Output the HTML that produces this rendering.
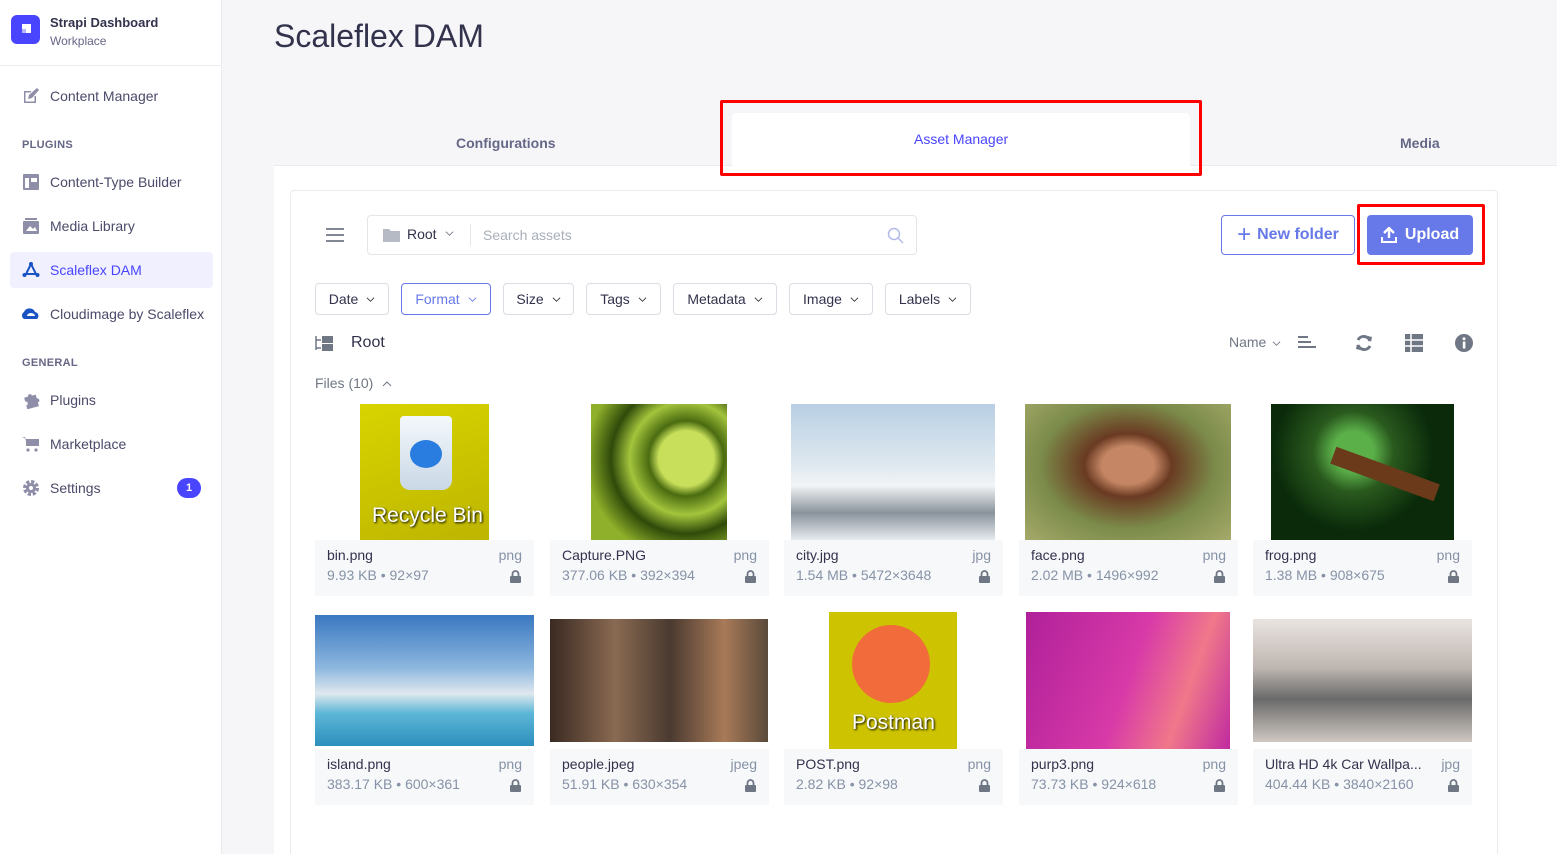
<!DOCTYPE html>
<html><head><meta charset="utf-8"><style>
*{box-sizing:border-box;margin:0;padding:0}
html{width:1557px;height:854px;overflow:hidden}
body{width:1557px;height:854px;overflow:hidden;background:#f6f6f9;font-family:"Liberation Sans",sans-serif;position:relative;color:#32324d}
.a{position:absolute}
.side{left:0;top:0;width:222px;height:854px;background:#fff;border-right:1px solid #eaeaef}
.nav{position:absolute;left:22px;font-size:14px;color:#4a4a6a;display:flex;align-items:center}
.nav svg{width:18px;height:18px;margin-right:10px}
.sec{position:absolute;left:22px;font-size:11px;color:#666687;font-weight:bold;letter-spacing:.3px}
.flt{position:absolute;top:283px;height:32px;border:1px solid #dcdce4;border-radius:4px;font-size:14px;color:#32324d;display:flex;align-items:center;justify-content:center;gap:8px;background:#fff}
.chev{width:9px;height:9px}
.card{position:absolute;width:219px;height:56px;background:#f7f8fa}
.card .n{position:absolute;left:12px;top:7px;font-size:14px;color:#32324d}
.card .m{position:absolute;left:12px;top:27px;font-size:14px;color:#8692a6}
.card .t{position:absolute;right:12px;top:7px;font-size:14px;color:#8692a6}
.card svg{position:absolute;right:13px;top:30px}
.img{position:absolute}
</style></head><body>
<div class="a side"></div>
<div class="a" style="left:11px;top:15px;width:29px;height:29px;border-radius:6px;background:#4945ff"></div>
<svg class="a" style="left:18px;top:22px" width="15" height="15" viewBox="0 0 15 15"><path d="M4 2h9v9H8V7H4z" fill="#fff"/><path d="M4 7h4v4H4z" fill="#fff" opacity=".6"/></svg>
<div class="a" style="left:50px;top:15px;font-size:13px;font-weight:bold;color:#32324d">Strapi Dashboard</div>
<div class="a" style="left:50px;top:34px;font-size:12px;color:#666687">Workplace</div>
<div class="a" style="left:0;top:65px;width:221px;height:1px;background:#eaeaef"></div>
<div class="nav" style="top:87px"><svg viewBox="0 0 18 18"><path d="M2 4h7v1.5H3.5v9h9V9H14v7H2z" fill="#8e8ea9"/><path d="M6 12l1-4 8-7 2 2-7 8z" fill="#8e8ea9"/></svg>Content Manager</div>
<div class="sec" style="top:139px">PLUGINS</div>
<div class="nav" style="top:173px"><svg viewBox="0 0 18 18"><rect x="1" y="1" width="16" height="16" rx="1" fill="#8e8ea9"/><rect x="3" y="5" width="4" height="10" fill="#fff"/><rect x="9" y="5" width="6" height="4" fill="#fff"/></svg>Content-Type Builder</div>
<div class="nav" style="top:217px"><svg viewBox="0 0 18 18"><rect x="3" y="1" width="12" height="2" fill="#8e8ea9"/><rect x="1" y="4" width="16" height="13" rx="1" fill="#8e8ea9"/><path d="M4 14l4-5 3 3 2-2 2 4z" fill="#fff"/></svg>Media Library</div>
<div class="a" style="left:10px;top:252px;width:203px;height:36px;border-radius:4px;background:#f0f0ff"></div>
<div class="nav" style="top:261px;color:#4945ff"><svg viewBox="0 0 18 18"><circle cx="9" cy="3" r="2" fill="#1a53c4"/><circle cx="2.5" cy="14" r="2" fill="#1a53c4"/><circle cx="15.5" cy="14" r="2" fill="#1a53c4"/><path d="M9 3L4 13h10z" fill="none" stroke="#1a53c4" stroke-width="2"/></svg>Scaleflex DAM</div>
<div class="nav" style="top:305px"><svg viewBox="0 0 18 18"><path d="M2 14a4 4 0 010-7 6 6 0 0111 0 4 4 0 012 7z" fill="#1a53c4"/><path d="M5 11a4 3 0 018 0z" fill="#fff"/></svg>Cloudimage by Scaleflex</div>
<div class="sec" style="top:357px">GENERAL</div>
<div class="nav" style="top:391px"><svg viewBox="0 0 18 18"><path d="M3 5h4a2 2 0 114 0h4v4a2 2 0 110 4v4H3v-4a2 2 0 100-4z" fill="#8e8ea9" transform="rotate(-15 9 9)"/></svg>Plugins</div>
<div class="nav" style="top:435px"><svg viewBox="0 0 18 18"><path d="M0 2h3l2 9h10l2-7H5" fill="#8e8ea9"/><rect x="4" y="4" width="13" height="7" fill="#8e8ea9"/><circle cx="6" cy="15" r="1.6" fill="#8e8ea9"/><circle cx="14" cy="15" r="1.6" fill="#8e8ea9"/></svg>Marketplace</div>
<div class="nav" style="top:479px"><svg viewBox="0 0 18 18"><circle cx="9" cy="9" r="6" fill="none" stroke="#8e8ea9" stroke-width="4" stroke-dasharray="3 1.7"/><circle cx="9" cy="9" r="5" fill="#8e8ea9"/><circle cx="9" cy="9" r="2" fill="#fff"/></svg>Settings</div>
<div class="a" style="left:177px;top:478px;width:24px;height:20px;border-radius:10px;background:#4945ff;color:#fff;font-size:11px;font-weight:bold;text-align:center;line-height:20px">1</div>

<div class="a" style="left:274px;top:18px;font-size:32px;color:#32324d">Scaleflex DAM</div>
<div class="a" style="left:274px;top:165px;width:1283px;height:690px;background:#fff;border-top:1px solid #eaeaef"></div>
<div class="a" style="left:456px;top:135px;font-size:14px;font-weight:bold;color:#666687">Configurations</div>
<div class="a" style="left:1400px;top:135px;font-size:14px;font-weight:bold;color:#666687">Media</div>
<div class="a" style="left:732px;top:113px;width:458px;height:53px;background:#fff;border-radius:4px 4px 0 0"></div>
<div class="a" style="left:914px;top:131px;font-size:14px;color:#4945ff">Asset Manager</div>
<div class="a" style="left:720px;top:100px;width:482px;height:76px;border:3px solid #f00;border-radius:2px"></div>

<div class="a" style="left:290px;top:190px;width:1208px;height:664px;border:1px solid #eaeaef;border-bottom:none;border-radius:4px 4px 0 0;background:#fff"></div>
<svg class="a" style="left:325px;top:227px" width="20" height="16"><path d="M1 2h18M1 8h18M1 14h18" stroke="#6f7785" stroke-width="1.8"/></svg>
<div class="a" style="left:367px;top:215px;width:550px;height:40px;border:1px solid #e3e5e9;border-radius:4px"></div>
<svg class="a" style="left:383px;top:228px" width="17" height="14"><path d="M0 1h6l2 2h9v11H0z" fill="#b6bac4"/></svg>
<div class="a" style="left:407px;top:226px;font-size:14px;color:#32324d">Root</div>
<svg class="a chev" style="left:445px;top:229px" viewBox="0 0 10 10"><path d="M1 3l4 4 4-4" stroke="#6f7785" fill="none"/></svg>
<div class="a" style="left:470px;top:224px;width:1px;height:22px;background:#e3e5e9"></div>
<div class="a" style="left:483px;top:227px;font-size:14px;color:#a9afbb">Search assets</div>
<svg class="a" style="left:887px;top:227px" width="17" height="17"><circle cx="7" cy="7" r="5.5" stroke="#b3b9e8" stroke-width="1.5" fill="none"/><path d="M11 11l5 5" stroke="#b3b9e8" stroke-width="1.5"/></svg>

<div class="a" style="left:1221px;top:215px;width:134px;height:40px;border:1px solid #6779e8;border-radius:4px;color:#6779e8;font-size:16px;font-weight:bold;display:flex;align-items:center;justify-content:center;gap:6px"><span style="font-size:24px;font-weight:normal;line-height:1">+</span>New folder</div>
<div class="a" style="left:1367px;top:215px;width:106px;height:40px;background:#6779e8;border-radius:4px;color:#fff;font-size:16px;font-weight:bold;display:flex;align-items:center;justify-content:center;gap:8px"><svg width="16" height="16"><path d="M8 1v10M3 6l5-5 5 5" stroke="#fff" stroke-width="2.4" fill="none"/><path d="M1 10v5h14v-5" stroke="#fff" stroke-width="2" fill="none"/></svg>Upload</div>
<div class="a" style="left:1357px;top:204px;width:128px;height:61px;border:3px solid #f00;border-radius:2px"></div>

<div class="flt" style="left:315px;width:74px">Date <svg class="chev" viewBox="0 0 10 10"><path d="M1 3l4 4 4-4" stroke="#333" fill="none"/></svg></div>
<div class="flt" style="left:401px;width:90px;border-color:#6779e8;color:#6779e8">Format <svg class="chev" viewBox="0 0 10 10"><path d="M1 3l4 4 4-4" stroke="#6779e8" fill="none"/></svg></div>
<div class="flt" style="left:503px;width:71px">Size <svg class="chev" viewBox="0 0 10 10"><path d="M1 3l4 4 4-4" stroke="#333" fill="none"/></svg></div>
<div class="flt" style="left:586px;width:75px">Tags <svg class="chev" viewBox="0 0 10 10"><path d="M1 3l4 4 4-4" stroke="#333" fill="none"/></svg></div>
<div class="flt" style="left:673px;width:104px">Metadata <svg class="chev" viewBox="0 0 10 10"><path d="M1 3l4 4 4-4" stroke="#333" fill="none"/></svg></div>
<div class="flt" style="left:789px;width:84px">Image <svg class="chev" viewBox="0 0 10 10"><path d="M1 3l4 4 4-4" stroke="#333" fill="none"/></svg></div>
<div class="flt" style="left:885px;width:86px">Labels <svg class="chev" viewBox="0 0 10 10"><path d="M1 3l4 4 4-4" stroke="#333" fill="none"/></svg></div>

<svg class="a" style="left:315px;top:335px" width="19" height="16"><path d="M1 1v14M1 5h5M1 13h5" stroke="#6f7785" stroke-width="1.5"/><rect x="7" y="1" width="11" height="7" fill="#6f7785"/><rect x="7" y="9" width="11" height="7" fill="#6f7785"/></svg>
<div class="a" style="left:351px;top:334px;font-size:16px;color:#32324d">Root</div>
<div class="a" style="left:315px;top:375px;font-size:14px;color:#6f7785">Files (10)</div>
<svg class="a" style="left:382px;top:379px" width="10" height="10"><path d="M1 7l4-4 4 4" stroke="#6f7785" fill="none"/></svg>

<div class="a" style="left:1229px;top:334px;font-size:14px;color:#6f7785">Name</div>
<svg class="a chev" style="left:1272px;top:339px" viewBox="0 0 10 10"><path d="M1 3l4 4 4-4" stroke="#6f7785" fill="none"/></svg>
<svg class="a" style="left:1298px;top:335px" width="18" height="15"><path d="M0 2h10M0 7h13M0 12h18" stroke="#6f7785" stroke-width="2"/></svg>
<svg class="a" style="left:1355px;top:334px" width="18" height="18"><path d="M15 7A6.5 6.5 0 003 6M3 11a6.5 6.5 0 0012 1" stroke="#6f7785" stroke-width="3" fill="none"/><path d="M13 2l4 1-1 5zM5 16l-4-1 1-5z" fill="#6f7785"/></svg>
<svg class="a" style="left:1405px;top:334px" width="18" height="18"><path d="M0 0h18v18H0z" fill="#6f7785"/><path d="M0 6h18M0 12h18M6 0v18" stroke="#fff" stroke-width="1.5"/></svg>
<svg class="a" style="left:1455px;top:334px" width="18" height="18"><circle cx="9" cy="9" r="9" fill="#6f7785"/><rect x="7.8" y="7.5" width="2.6" height="7" fill="#fff"/><circle cx="9" cy="4.8" r="1.5" fill="#fff"/></svg>

<div class="img" style="left:360px;top:404px;width:129px;height:136px;background:linear-gradient(160deg,#d8d400,#bdb500)"></div>
<div class="img" style="left:400px;top:416px;width:52px;height:74px;background:linear-gradient(#f4f8fc,#c9d8e6);border-radius:4px 4px 10px 10px"></div>
<div class="img" style="left:410px;top:440px;width:32px;height:28px;border-radius:50%;background:#2a7de0"></div>
<div class="a" style="left:372px;top:504px;font-size:21px;color:#fff;text-shadow:1px 1px 2px #000">Recycle Bin</div>
<div class="img" style="left:591px;top:404px;width:136px;height:136px;background:radial-gradient(circle at 70% 40%,#c7df5a 0 22%,#4a6b10 30%,#a3c43c 45%,#2f4a0a 60%,#8fb02a 80%)"></div>
<div class="img" style="left:791px;top:404px;width:204px;height:136px;background:linear-gradient(#b9cfe4,#dfe8ef 45%,#f2f4f6 60%,#8a939c 80%,#e6ebef)"></div>
<div class="img" style="left:1025px;top:404px;width:206px;height:136px;background:radial-gradient(ellipse at 50% 45%,#c48664 0 18%,#6a3a22 30%,#7b8b4a 60%,#a6aa6a)"></div>
<div class="img" style="left:1271px;top:404px;width:183px;height:136px;background:radial-gradient(circle at 45% 35%,#5bb04a 0 15%,#2a5a1e 30%,#0a2a0a 60%),#0a2a0a"></div>
<div class="img" style="left:1330px;top:465px;width:110px;height:18px;background:#6a3a1a;transform:rotate(20deg)"></div>
<div class="img" style="left:315px;top:615px;width:219px;height:131px;background:linear-gradient(#3a78c0,#8cb6de 40%,#dfe8ee 60%,#5db6d6 75%,#2c8fbd)"></div>
<div class="img" style="left:550px;top:619px;width:218px;height:123px;background:linear-gradient(90deg,#3a2a22,#8a6a52 30%,#4a3a30 55%,#a87a58 80%,#5a4a3a)"></div>
<div class="img" style="left:829px;top:612px;width:128px;height:137px;background:#cdc300"></div>
<div class="img" style="left:852px;top:625px;width:78px;height:78px;border-radius:50%;background:#f26b3a"></div>
<div class="a" style="left:852px;top:711px;font-size:21px;color:#fff;text-shadow:1px 1px 2px #000">Postman</div>
<div class="img" style="left:1026px;top:612px;width:204px;height:137px;background:linear-gradient(110deg,#b0209a,#d83aa8 50%,#f0788a 75%,#c02aa0)"></div>
<div class="img" style="left:1253px;top:619px;width:219px;height:123px;background:linear-gradient(#eae4e0,#bdb5b0 40%,#6a6a6a 65%,#cfc8c2)"></div>

<div class="card" style="left:315px;top:540px"><div class="n">bin.png</div><div class="t">png</div><div class="m">9.93 KB • 92×97</div><svg width="11" height="13"><path d="M2.5 6V4a3 3 0 016 0v2" stroke="#6f7785" stroke-width="1.8" fill="none"/><rect x="0" y="6" width="11" height="7" rx="1" fill="#6f7785"/></svg></div>
<div class="card" style="left:550px;top:540px"><div class="n">Capture.PNG</div><div class="t">png</div><div class="m">377.06 KB • 392×394</div><svg width="11" height="13"><path d="M2.5 6V4a3 3 0 016 0v2" stroke="#6f7785" stroke-width="1.8" fill="none"/><rect x="0" y="6" width="11" height="7" rx="1" fill="#6f7785"/></svg></div>
<div class="card" style="left:784px;top:540px"><div class="n">city.jpg</div><div class="t">jpg</div><div class="m">1.54 MB • 5472×3648</div><svg width="11" height="13"><path d="M2.5 6V4a3 3 0 016 0v2" stroke="#6f7785" stroke-width="1.8" fill="none"/><rect x="0" y="6" width="11" height="7" rx="1" fill="#6f7785"/></svg></div>
<div class="card" style="left:1019px;top:540px"><div class="n">face.png</div><div class="t">png</div><div class="m">2.02 MB • 1496×992</div><svg width="11" height="13"><path d="M2.5 6V4a3 3 0 016 0v2" stroke="#6f7785" stroke-width="1.8" fill="none"/><rect x="0" y="6" width="11" height="7" rx="1" fill="#6f7785"/></svg></div>
<div class="card" style="left:1253px;top:540px"><div class="n">frog.png</div><div class="t">png</div><div class="m">1.38 MB • 908×675</div><svg width="11" height="13"><path d="M2.5 6V4a3 3 0 016 0v2" stroke="#6f7785" stroke-width="1.8" fill="none"/><rect x="0" y="6" width="11" height="7" rx="1" fill="#6f7785"/></svg></div>
<div class="card" style="left:315px;top:749px"><div class="n">island.png</div><div class="t">png</div><div class="m">383.17 KB • 600×361</div><svg width="11" height="13"><path d="M2.5 6V4a3 3 0 016 0v2" stroke="#6f7785" stroke-width="1.8" fill="none"/><rect x="0" y="6" width="11" height="7" rx="1" fill="#6f7785"/></svg></div>
<div class="card" style="left:550px;top:749px"><div class="n">people.jpeg</div><div class="t">jpeg</div><div class="m">51.91 KB • 630×354</div><svg width="11" height="13"><path d="M2.5 6V4a3 3 0 016 0v2" stroke="#6f7785" stroke-width="1.8" fill="none"/><rect x="0" y="6" width="11" height="7" rx="1" fill="#6f7785"/></svg></div>
<div class="card" style="left:784px;top:749px"><div class="n">POST.png</div><div class="t">png</div><div class="m">2.82 KB • 92×98</div><svg width="11" height="13"><path d="M2.5 6V4a3 3 0 016 0v2" stroke="#6f7785" stroke-width="1.8" fill="none"/><rect x="0" y="6" width="11" height="7" rx="1" fill="#6f7785"/></svg></div>
<div class="card" style="left:1019px;top:749px"><div class="n">purp3.png</div><div class="t">png</div><div class="m">73.73 KB • 924×618</div><svg width="11" height="13"><path d="M2.5 6V4a3 3 0 016 0v2" stroke="#6f7785" stroke-width="1.8" fill="none"/><rect x="0" y="6" width="11" height="7" rx="1" fill="#6f7785"/></svg></div>
<div class="card" style="left:1253px;top:749px"><div class="n">Ultra HD 4k Car Wallpa...</div><div class="t">jpg</div><div class="m">404.44 KB • 3840×2160</div><svg width="11" height="13"><path d="M2.5 6V4a3 3 0 016 0v2" stroke="#6f7785" stroke-width="1.8" fill="none"/><rect x="0" y="6" width="11" height="7" rx="1" fill="#6f7785"/></svg></div>
</body></html>
